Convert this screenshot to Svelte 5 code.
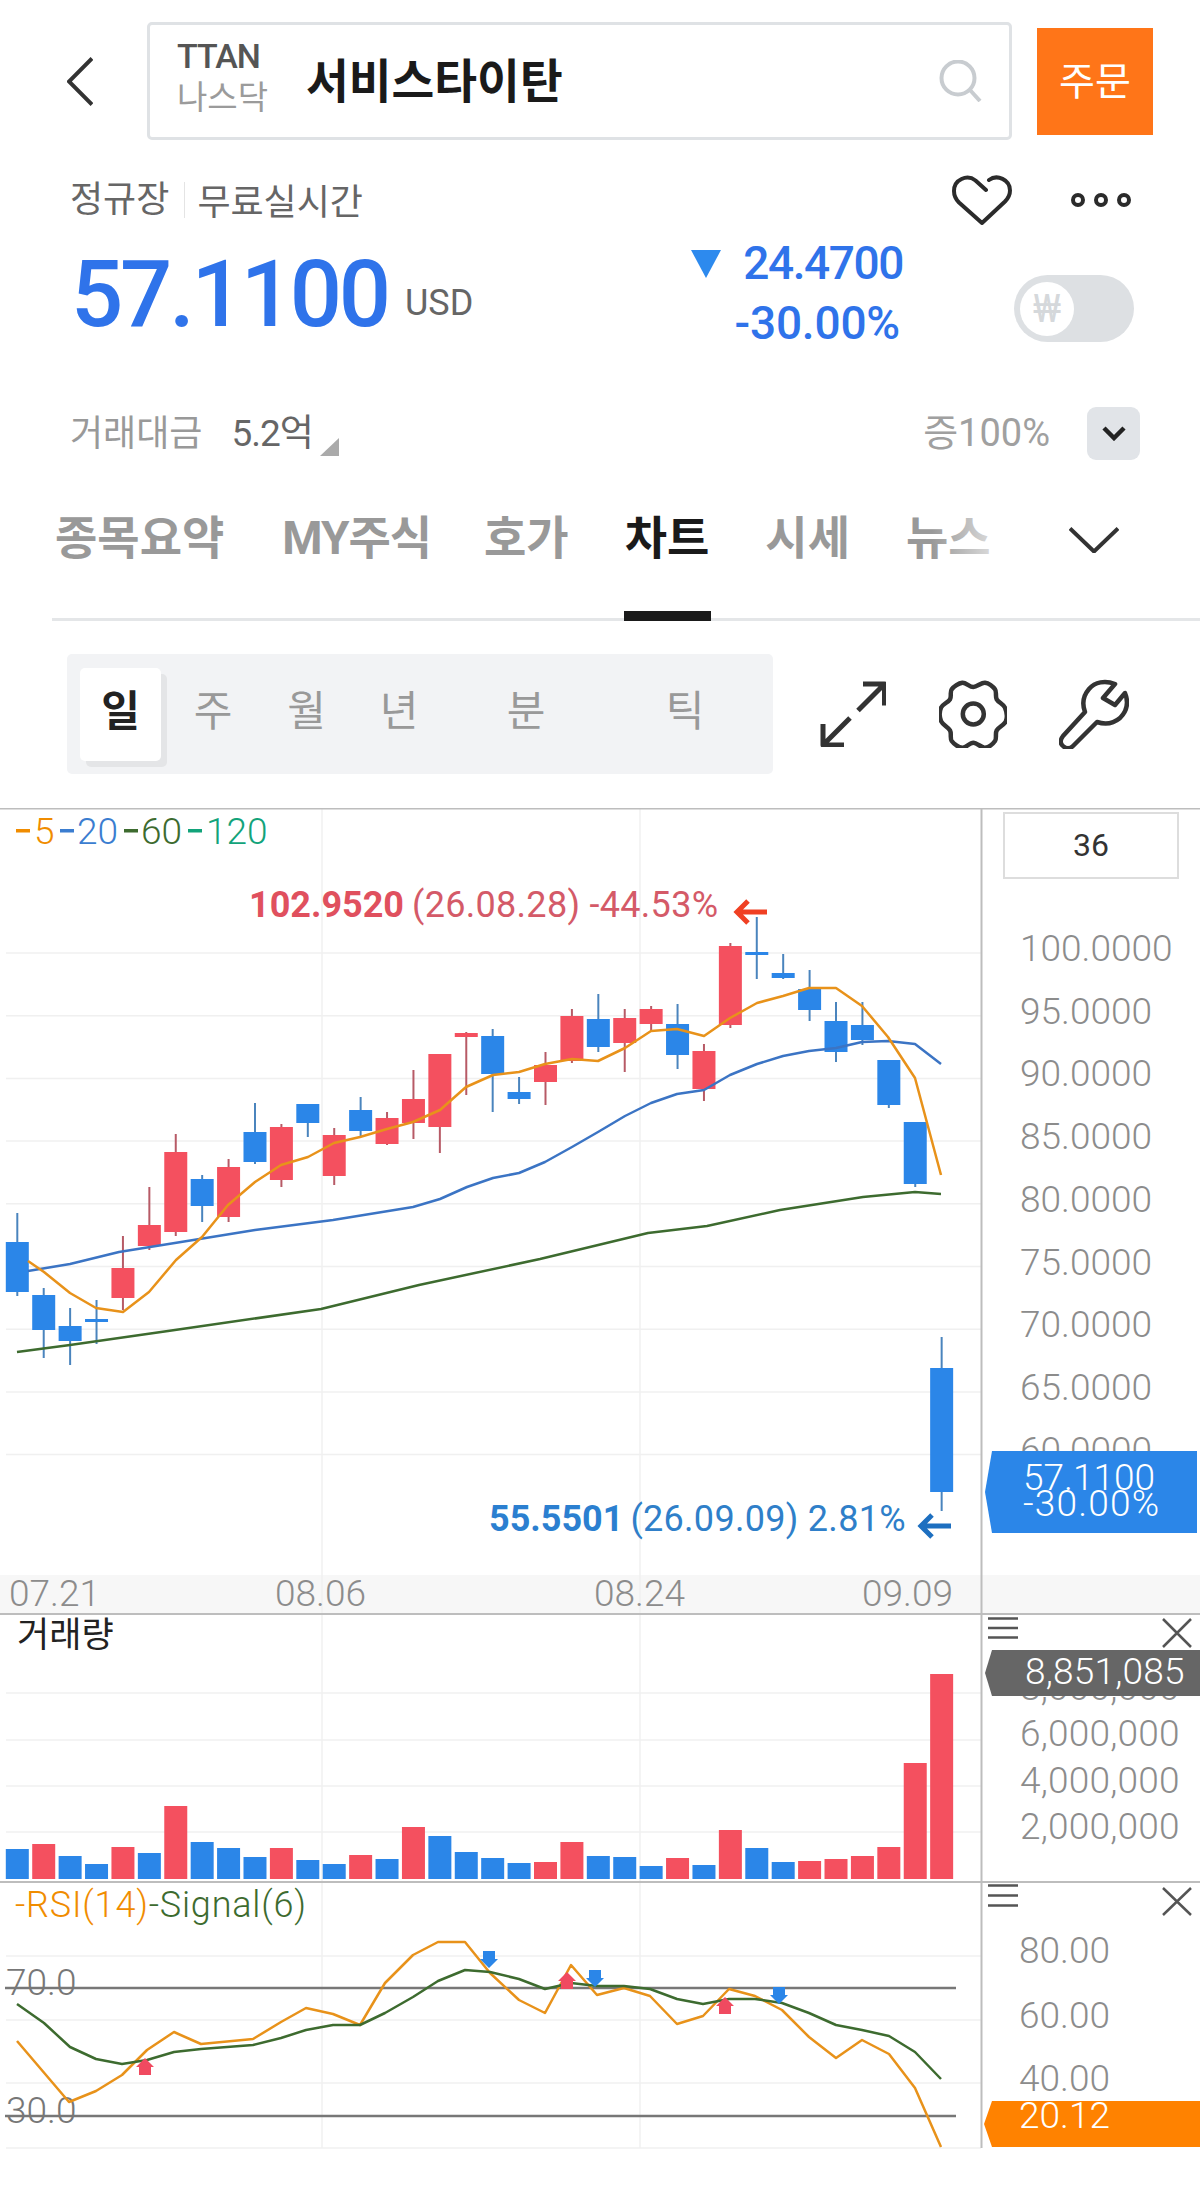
<script>
  const tabs = ['종목요약', 'MY주식', '호가', '차트', '시세', '뉴스'];
  const periods = ['일', '주', '월', '년', '분', '틱'];

  const cx = (i) => 17.3 + 26.41 * i;

  // [up, open/close top, bottom, wick top, wick bottom] in page pixels
  const candles = [
    [0, 1242, 1292, 1213, 1296], [0, 1295, 1330, 1288, 1358], [0, 1326, 1341, 1308, 1365],
    [0, 1319, 1322, 1300, 1344], [1, 1268, 1298, 1236, 1310], [1, 1225, 1246, 1187, 1250],
    [1, 1152, 1232, 1134, 1236], [0, 1179, 1206, 1175, 1222], [1, 1167, 1217, 1159, 1222],
    [0, 1132, 1162, 1103, 1164], [1, 1127, 1180, 1124, 1187], [0, 1104, 1123, 1104, 1137],
    [1, 1135, 1176, 1128, 1185], [0, 1110, 1131, 1097, 1136], [1, 1118, 1144, 1112, 1145],
    [1, 1099, 1123, 1070, 1139], [1, 1054, 1127, 1054, 1153], [1, 1033, 1037, 1032, 1095],
    [0, 1036, 1074, 1029, 1112], [0, 1092, 1099, 1077, 1104], [1, 1065, 1082, 1052, 1105],
    [1, 1016, 1061, 1009, 1063], [0, 1019, 1047, 994, 1052], [1, 1018, 1043, 1009, 1072],
    [1, 1009, 1024, 1006, 1031], [0, 1024, 1055, 1004, 1069], [1, 1051, 1089, 1044, 1101],
    [1, 946, 1025, 943, 1028], [0, 952, 955, 917, 979], [0, 973, 978, 954, 979],
    [0, 989, 1010, 970, 1021], [0, 1021, 1052, 1002, 1062], [0, 1025, 1040, 1002, 1045],
    [0, 1060, 1105, 1060, 1108], [0, 1122, 1184, 1122, 1187], [0, 1368, 1492, 1337, 1511],
  ];

  const ma5 = '28,1261 44,1272 70,1293 96,1308 123,1312 149,1292 176,1260 202,1237 228,1205 255,1182 281,1165 308,1157 334,1143 360,1137 387,1129 413,1122 440,1110 466,1087 493,1075 519,1072 545,1064 572,1059 598,1061 625,1048 651,1031 677,1029 704,1036 730,1018 757,1003 783,996 809,988 836,988 862,1006 888,1037 915,1078 941,1175';
  const ma20 = '28,1271 70,1264 119,1252 181,1242 255,1230 333,1220 413,1207 440,1199 467,1187 493,1178 519,1173 545,1162 572,1147 598,1132 625,1116 651,1103 677,1094 704,1090 730,1075 757,1064 783,1056 809,1051 836,1048 862,1042 888,1041 915,1044 941,1064';
  const ma60 = '17,1352 70,1345 168,1331 321,1309 419,1285 540,1259 648,1233 707,1226 780,1210 863,1197 915,1192 941,1194';

  const volumes = [
    [0, 1849], [1, 1844], [0, 1856], [0, 1864], [1, 1847], [0, 1853], [1, 1806], [0, 1842], [0, 1848],
    [0, 1857], [1, 1848], [0, 1860], [0, 1864], [1, 1855], [0, 1859], [1, 1827], [0, 1836], [0, 1852],
    [0, 1858], [0, 1863], [1, 1862], [1, 1842], [0, 1856], [0, 1857], [0, 1866], [1, 1858], [0, 1865],
    [1, 1830], [0, 1848], [0, 1862], [1, 1861], [1, 1859], [1, 1856], [1, 1847], [1, 1763], [1, 1674],
  ];

  const rsi = '17,2041 69,2102 96,2091 122,2075 147,2050 174,2032 201,2044 253,2039 281,2022 306,2008 333,2014 360,2025 385,1983 413,1955 438,1942 465,1942 490,1973 519,2000 545,2013 571,1965 597,1995 624,1988 650,1996 677,2024 703,2016 729,1989 755,1996 782,2010 809,2037 836,2058 862,2040 889,2054 915,2088 941,2147';
  const signal = '17,2004 44,2023 70,2047 96,2059 122,2064 147,2060 174,2052 201,2049 253,2045 281,2038 306,2030 333,2025 360,2025 385,2013 413,1997 438,1981 465,1970 490,1972 519,1979 545,1989 571,1983 597,1986 624,1986 650,1989 677,1999 703,2004 729,1999 755,1999 782,2003 809,2013 836,2025 862,2030 889,2036 915,2052 941,2079';

  const priceTicks = ['100.0000', '95.0000', '90.0000', '85.0000', '80.0000', '75.0000', '70.0000', '65.0000', '60.0000'];

  const legend = [
    { dash: 16, x: 34, label: '5', color: '#f08c00' },
    { dash: 60, x: 77, label: '20', color: '#3b7dd0' },
    { dash: 124, x: 141, label: '60', color: '#3d6b2f' },
    { dash: 188, x: 206, label: '120', color: '#12a37a' },
  ];

  // points the cog outline passes through, clockwise from the top notch
  const cog = [
    [973.3, 686], [985, 681.7], [995, 688.3], [996.7, 698.3], [1005, 706.7], [1006, 720],
    [996.7, 729.3], [995, 740], [985, 746.7], [973.3, 741.7], [962.3, 746.7], [951.7, 740],
    [950, 729.3], [941, 720], [941, 706.7], [950, 698.3], [951.7, 688.3], [962.3, 681.7],
  ];

  // closed catmull-rom curve as cubic beziers
  function gearPath(pts) {
    const n = pts.length;
    const at = (i) => pts[(i + n) % n];
    let d = `M${pts[0][0]} ${pts[0][1]}`;
    for (let i = 0; i < n; i++) {
      const [p0, p1, p2, p3] = [at(i - 1), at(i), at(i + 1), at(i + 2)];
      const c1 = [p1[0] + (p2[0] - p0[0]) / 6, p1[1] + (p2[1] - p0[1]) / 6];
      const c2 = [p2[0] - (p3[0] - p1[0]) / 6, p2[1] - (p3[1] - p1[1]) / 6];
      d += `C${c1[0].toFixed(1)} ${c1[1].toFixed(1)} ${c2[0].toFixed(1)} ${c2[1].toFixed(1)} ${p2[0]} ${p2[1]}`;
    }
    return d + 'Z';
  }
</script>

<div class="page">
  <header class="top">
    <svg class="back" width="26" height="49" viewBox="0 0 26 49"><path d="M25 1.500 2 24.500l23 23" /></svg>
    <div class="search">
      <div class="ticker">
        <span class="code">TTAN</span>
        <span class="market">나스닥</span>
      </div>
      <strong class="name">서비스타이탄</strong>
      <svg class="glass" width="43" height="42" viewBox="0 0 43 42">
        <circle cx="19" cy="18" r="16.500" />
        <path d="m31 30 10 11" />
      </svg>
    </div>
    <button class="order">주문</button>
  </header>

  <div class="meta">
    <span class="session">정규장</span>
    <span class="feed">무료실시간</span>
    <svg class="heart" width="60" height="50" viewBox="0 0 60 50">
      <path d="M34 15 23.500 5.500C15 -1 2 4.500 2 16c0 5 2 8.500 5 11.500L30 48 53 26.500c3-3 5-6.500 5-11 0-11-13-16.500-21-10.500" />
    </svg>
    <div class="dots"><i></i><i></i><i></i></div>
  </div>

  <div class="quote">
    <div class="last">57.1100</div>
    <div class="unit">USD</div>
    <i class="down"></i>
    <div class="change">
      <div>24.4700</div>
      <div class="pct">-30.00%</div>
    </div>
    <div class="toggle"><span class="knob">₩</span></div>
  </div>

  <div class="stats">
    <span class="label">거래대금</span>
    <span class="amount">5.2억</span>
    <i class="corner"></i>
    <span class="margin">증100%</span>
    <button class="more" aria-label="더보기">
      <svg width="24" height="15" viewBox="0 0 24 15"><path d="m2 2 10 10L22 2" /></svg>
    </button>
  </div>

  <nav class="tabs">
    {#each tabs as tab, i}
      <span class="tab" class:active={i === 3} class:my={i === 1}>{tab}</span>
    {/each}
    <svg class="tabs-more" width="50" height="26" viewBox="0 0 50 26"><path d="m1 1.500 24 23 24-23" /></svg>
  </nav>

  <div class="tools">
    <div class="seg">
      {#each periods as p, i}
        <span class="cell"><span class="period" class:on={i === 0}>{p}</span></span>
      {/each}
    </div>
    <svg class="tool expand" width="66" height="66" viewBox="820 681 66 66">
      <path d="M863 684h21.500v21.500M884.500 684 858 710.500M823 724v21h21M823 745l27-27" />
    </svg>
    <svg class="tool gear" width="68" height="68" viewBox="939 679 68 68">
      <path d={gearPath(cog)} />
      <circle cx="973.300" cy="713" r="10.500" />
    </svg>
    <svg class="tool wrench" width="70" height="70" viewBox="1059 679 70 70">
      <path d="M1115 684c-10-4-20-2-26 5-6 7-7 15-4 23l-22 24c-3 4-3 8 0 10 3 3 7 3 10 0l24-24c9 3 17 1 23-4 7-7 9-15 5-25l-10 12-12-7 12-14Z" />
    </svg>
  </div>

  <svg class="chart" width="1200" height="1383" viewBox="0 808 1200 1383">
    <!-- price pane -->
    <rect x="0" y="1575" width="1200" height="38" fill="#f7f7f7" />
    {#each priceTicks as _, k}
      <line class="grid" x1="6" x2="981" y1={953 + 62.7 * k} y2={953 + 62.7 * k} />
    {/each}
    <line class="grid" x1="322" x2="322" y1="808" y2="2148" />
    <line class="grid" x1="640" x2="640" y1="808" y2="2148" />

    {#each [1693, 1740, 1786, 1832] as y}
      <line class="grid" x1="6" x2="981" y1={y} y2={y} />
    {/each}
    {#each [1956, 2020, 2083, 2148] as y}
      <line class="grid" x1="6" x2="981" y1={y} y2={y} />
    {/each}

    <line class="rule" x1="0" x2="1200" y1="808.500" y2="808.500" />
    <line class="rule" x1="0" x2="1200" y1="1614" y2="1614" />
    <line class="rule" x1="0" x2="1200" y1="1882" y2="1882" />
    <line class="axis" x1="981.500" x2="981.500" y1="808" y2="2148" />

    {#each legend as item}
      <rect x={item.dash} y="829" width="14" height="3.500" fill={item.color} />
      <text class="num" x={item.x} y="844" fill={item.color}>{item.label}</text>
    {/each}

    <text class="note" x="249" y="917" fill="#d45a68"><tspan class="strong" fill="#e0505e">102.9520</tspan><tspan dx="8">(26.08.28) -44.53%</tspan></text>
    <path class="note-arrow" d="M767 912h-30m11-11-11 11 11 11" stroke="#f04023" />

    {#each candles as c, i}
      <line class="wick" x1={cx(i)} x2={cx(i)} y1={c[3]} y2={c[4]} stroke={c[0] ? '#b75a66' : '#4a84bd'} />
      <rect x={cx(i) - 11.5} y={c[1]} width="23" height={c[2] - c[1]} fill={c[0] ? '#f4505f' : '#2b86e8'} />
    {/each}

    <polyline class="line" points={ma60} stroke="#3d6b2f" />
    <polyline class="line" points={ma20} stroke="#3b74c4" />
    <polyline class="line ma5" points={ma5} stroke="#e8921a" />

    <text class="note" x="489" y="1531" fill="#2f7fc9"><tspan class="strong" fill="#2b7fd0">55.5501</tspan><tspan dx="7">(26.09.09) 2.81%</tspan></text>
    <path class="note-arrow" d="M951 1526h-30m11-11-11 11 11 11" stroke="#1d6fc0" />

    <text class="num date" x="9" y="1606">07.21</text>
    <text class="num date" x="275" y="1606">08.06</text>
    <text class="num date" x="594" y="1606">08.24</text>
    <text class="num date" x="862" y="1606">09.09</text>

    <rect x="1004" y="813" width="174" height="65" fill="#fff" stroke="#ddd" stroke-width="2" />
    <text class="count" x="1091" y="856" text-anchor="middle">36</text>

    {#each priceTicks as tick, k}
      <text class="num tick" x="1020" y={961 + 62.7 * k}>{tick}</text>
    {/each}
    <polygon points="992,1451 1197,1451 1197,1533 992,1533 985,1492" fill="#2b86e8" />
    <text class="num tag" x="1023" y="1490">57.1100</text>
    <text class="num tag wide" x="1023" y="1516">-30.00%</text>

    <!-- volume pane -->
    <text class="pane-title" x="17" y="1647">거래량</text>
    {#each volumes as v, i}
      <rect x={cx(i) - 11.5} y={v[1]} width="23" height={1879 - v[1]} fill={v[0] ? '#f4505f' : '#2b86e8'} />
    {/each}
    <path class="menu" d="M988 1618.500h30M988 1628h30M988 1637.500h30" />
    <path class="menu" d="M1163 1619l28 28m0-28-28 28" />
    {#each ['8,000,000', '6,000,000', '4,000,000', '2,000,000'] as tick, k}
      <text class="num tick vol" x="1020" y={1700 + 46.4 * k}>{tick}</text>
    {/each}
    <polygon points="992,1650 1200,1650 1200,1696 992,1696 985,1673" fill="#666" />
    <text class="num tag vol" x="1025" y="1684">8,851,085</text>

    <!-- rsi pane -->
    <text class="num legend-rsi" x="15" y="1917"><tspan fill="#f08c00">-RSI(14)</tspan><tspan fill="#3d6b2f">-Signal(6)</tspan></text>
    <text class="num limit" x="6" y="1995">70.0</text>
    <text class="num limit" x="6" y="2123">30.0</text>
    <line class="level" x1="5" x2="956" y1="1988" y2="1988" />
    <line class="level" x1="5" x2="956" y1="2116" y2="2116" />
    <polyline class="line thin" points={rsi} stroke="#e8921a" />
    <polyline class="line" points={signal} stroke="#3d6b2f" />

    {#each [[145, 2058], [567, 1972], [725, 1997]] as a}
      <path class="sig buy" d="M{a[0]} {a[1]}l9 9h-3v8h-12v-8h-3Z" />
    {/each}
    {#each [[489, 1951], [595, 1970], [779, 1987]] as a}
      <path class="sig sell" d="M{a[0] - 6} {a[1]}h12v8h3l-9 9-9-9h3Z" />
    {/each}

    <path class="menu" d="M988 1885.500h30M988 1895.500h30M988 1905.500h30" />
    <path class="menu" d="M1163 1888l28 27m0-27-28 27" />
    <text class="num tick" x="1019" y="1963">80.00</text>
    <text class="num tick" x="1019" y="2028">60.00</text>
    <text class="num tick" x="1019" y="2091">40.00</text>
    <polygon points="992,2101 1200,2101 1200,2147 992,2147 984,2124" fill="#ff8200" />
    <text class="num tag" x="1019" y="2128">20.12</text>
  </svg>
</div>

<style>
  :global(body) {
    background: #fff;
  }

  .page {
    width: 1200px;
    height: 2191px;
    overflow: hidden;
    background: #fff;
    font-family: Roboto, "Noto Sans CJK KR", sans-serif;
    color: #333;
  }

  button {
    border: none;
    padding: 0;
    font: inherit;
  }

  svg {
    display: block;
    flex: none;
  }

  .back path,
  .glass circle,
  .glass path,
  .heart path,
  .more path,
  .tabs-more path,
  .tool path,
  .tool circle,
  .note-arrow,
  .menu {
    fill: none;
  }

  /* header row */
  .top {
    display: flex;
    align-items: center;
    height: 118px;
    padding: 22px 47px 0 67px;
  }

  .back path {
    stroke: #333;
    stroke-width: 4;
  }

  .search {
    display: flex;
    align-items: center;
    flex: none;
    width: 865px;
    height: 118px;
    box-sizing: border-box;
    margin-left: 54px;
    padding: 0 27px 8px 27px;
    border: 3px solid #dfe2e5;
    border-radius: 5px;
  }

  .ticker {
    display: flex;
    flex-direction: column;
    gap: 4px;
    width: 129px;
    line-height: 38px;
  }

  .code {
    font-size: 34px;
    font-weight: 500;
    color: #555;
    letter-spacing: -1px;
  }

  .market {
    font-size: 33px;
    color: #9b9b9b;
  }

  .name {
    flex: 1;
    font-size: 46.500px;
    font-weight: 700;
    color: #1a1a1a;
  }

  .glass {
    margin-top: 8px;
  }

  .glass circle,
  .glass path {
    stroke: #c8ccd0;
    stroke-width: 4;
  }

  .order {
    flex: none;
    width: 116px;
    height: 107px;
    margin-left: 25px;
    padding-bottom: 6px;
    background: #ff7518;
    color: #fff;
    font-size: 39px;
  }

  /* session row */
  .meta {
    display: flex;
    align-items: center;
    height: 50px;
    margin-top: 35px;
    padding-left: 70px;
    font-size: 36px;
    color: #666;
  }

  .session {
    padding-right: 15px;
    border-right: 1px solid #e4e4e4;
    line-height: 36px;
  }

  .feed {
    margin: -3px 0 0 12px;
  }

  .heart {
    margin-left: auto;
  }

  .heart path {
    stroke: #2b2b2b;
    stroke-width: 4;
    stroke-linecap: round;
    stroke-linejoin: round;
  }

  .dots {
    display: flex;
    gap: 9px;
    margin: 0 69px 0 59px;
  }

  .dots i {
    width: 14px;
    height: 14px;
    box-sizing: border-box;
    border: 4.500px solid #2b2b2b;
    border-radius: 50%;
  }

  /* price row */
  .quote {
    display: flex;
    align-items: center;
    height: 96px;
    margin-top: 21px;
    padding-left: 71px;
  }

  .last {
    width: 334px;
    margin-top: 2px;
    font-size: 92px;
    font-weight: 500;
    line-height: 96px;
    letter-spacing: -3.200px;
    color: #2f73ea;
  }

  .unit {
    width: 286px;
    margin-top: 18px;
    font-size: 36px;
    color: #666;
  }

  .down {
    width: 0;
    height: 0;
    align-self: flex-start;
    margin-top: 4px;
    border-left: 15px solid transparent;
    border-right: 15px solid transparent;
    border-top: 28px solid #2d8aee;
  }

  .change {
    width: 182px;
    margin-top: -2px;
    text-align: right;
    font-size: 46px;
    font-weight: 500;
    line-height: 60px;
    color: #2f73ea;
    letter-spacing: -1.400px;
  }

  .pct {
    padding-right: 3px;
    letter-spacing: -0.2px;
  }

  .toggle {
    display: flex;
    align-items: center;
    flex: none;
    align-self: flex-start;
    width: 120px;
    height: 67px;
    margin: 29px 0 0 111px;
    padding-left: 6px;
    box-sizing: border-box;
    border-radius: 34px;
    background: #dde0e3;
  }

  .knob {
    width: 54px;
    height: 54px;
    border-radius: 50%;
    background: #fff;
    color: #d5d8db;
    font-size: 38px;
    font-weight: 400;
    line-height: 54px;
    text-align: center;
  }

  /* trading value row */
  .stats {
    display: flex;
    align-items: center;
    height: 53px;
    margin-top: 65px;
    padding: 0 60px 0 70px;
    font-size: 36px;
    color: #999;
  }

  .label,
  .amount,
  .margin {
    margin-top: -8px;
  }

  .amount {
    margin-left: 29px;
    font-size: 37px;
    color: #666;
    letter-spacing: -1px;
  }

  .corner {
    width: 0;
    height: 0;
    margin: 26px 0 0 7px;
    border-left: 19px solid transparent;
    border-bottom: 18px solid #aaa;
  }

  .margin {
    margin-left: auto;
    font-size: 38px;
    color: #a0a0a0;
  }

  .more {
    display: flex;
    align-items: center;
    justify-content: center;
    width: 53px;
    height: 53px;
    margin-left: 37px;
    border-radius: 9px;
    background: #e1e4e8;
  }

  .more path {
    stroke: #222;
    stroke-width: 4.500;
  }

  /* tabs */
  .tabs {
    position: relative;
    display: flex;
    height: 158px;
    margin-left: 52px;
    padding-left: 3px;
    border-bottom: 3px solid #e4e6e8;
    gap: 56px;
    font-size: 46px;
    font-weight: 700;
    color: #999;
  }

  .tabs::before,
  .tabs::after {
    content: "";
    position: absolute;
    top: 40px;
    height: 70px;
    width: 70px;
    pointer-events: none;
  }

  .tabs::before {
    left: 0;
    background: linear-gradient(90deg, rgba(255, 255, 255, 0.8), transparent);
  }

  .tabs::after {
    left: 880px;
    background: linear-gradient(90deg, transparent, rgba(255, 255, 255, 0.75));
  }

  .tab {
    position: relative;
    display: flex;
    align-items: center;
    padding-bottom: 10px;
  }

  .tab.my {
    margin: 0 -3px 0 2px;
    letter-spacing: -1px;
  }

  .tab.active {
    color: #1a1a1a;
  }

  .tab.active::after {
    content: "";
    position: absolute;
    left: -1px;
    right: -2px;
    bottom: -3px;
    height: 10px;
    background: #1a1a1a;
  }

  .tabs-more {
    position: absolute;
    left: 1017px;
    top: 67px;
  }

  .tabs-more path {
    stroke: #333;
    stroke-width: 4;
  }

  /* period + tool icons */
  .tools {
    display: flex;
    align-items: center;
    margin: 33px 0 0 67px;
    height: 120px;
  }

  .seg {
    display: grid;
    grid-template-columns: 86px 94px 93px 92px 162px 156px;
    align-items: center;
    flex: none;
    width: 706px;
    height: 120px;
    box-sizing: border-box;
    padding-left: 13px;
    border-radius: 5px;
    background: #f2f3f5;
    font-size: 42px;
    color: #999;
  }

  .cell {
    display: flex;
    justify-content: center;
  }

  .cell:first-child {
    justify-content: flex-start;
  }

  .period {
    line-height: 87px;
    padding-bottom: 6px;
  }

  .period.on {
    width: 81px;
    border-radius: 5px;
    background: #fff;
    box-shadow: 6px 6px 0 #e4e5e7;
    color: #222;
    font-weight: 700;
    text-align: center;
  }

  .tool path,
  .tool circle {
    stroke: #333;
    stroke-width: 4.500;
    stroke-linejoin: round;
  }

  .expand path {
    stroke-width: 5;
  }

  .expand {
    margin-left: 47px;
  }

  .gear {
    margin-left: 53px;
  }

  .wrench {
    margin-left: 52px;
  }

  /* chart */
  .chart {
    margin-top: 34px;
  }

  .grid {
    stroke: #f0f0f0;
    stroke-width: 1.500;
  }

  .rule,
  .axis {
    stroke: #bdbdbd;
    stroke-width: 2;
  }

  .num {
    font-size: 37px;
    font-weight: 300;
  }

  .vol {
    letter-spacing: 0.2px;
  }

  .legend-rsi {
    font-size: 36px;
    letter-spacing: 0.8px;
  }

  .date,
  .tick {
    fill: #8c8c8c;
  }

  .limit {
    fill: #777;
  }

  .tag {
    fill: #fff;
  }

  .wide {
    letter-spacing: 1.200px;
  }

  .note {
    font-size: 36px;
    font-weight: 400;
    letter-spacing: 0.3px;
  }

  .strong {
    font-weight: 700;
    letter-spacing: 0;
  }

  .note-arrow {
    stroke-width: 5;
  }

  .wick {
    stroke-width: 2;
  }

  .line {
    fill: none;
    stroke-width: 2.500;
    stroke-linejoin: round;
  }

  .count {
    font-size: 32px;
    fill: #333;
  }

  .pane-title {
    font-size: 35px;
    fill: #222;
  }

  .menu {
    stroke: #555;
    stroke-width: 2.500;
  }

  .level {
    stroke: #777;
    stroke-width: 2.500;
  }

  .buy {
    fill: #f04a60;
  }

  .sell {
    fill: #2b86e8;
  }
</style>
